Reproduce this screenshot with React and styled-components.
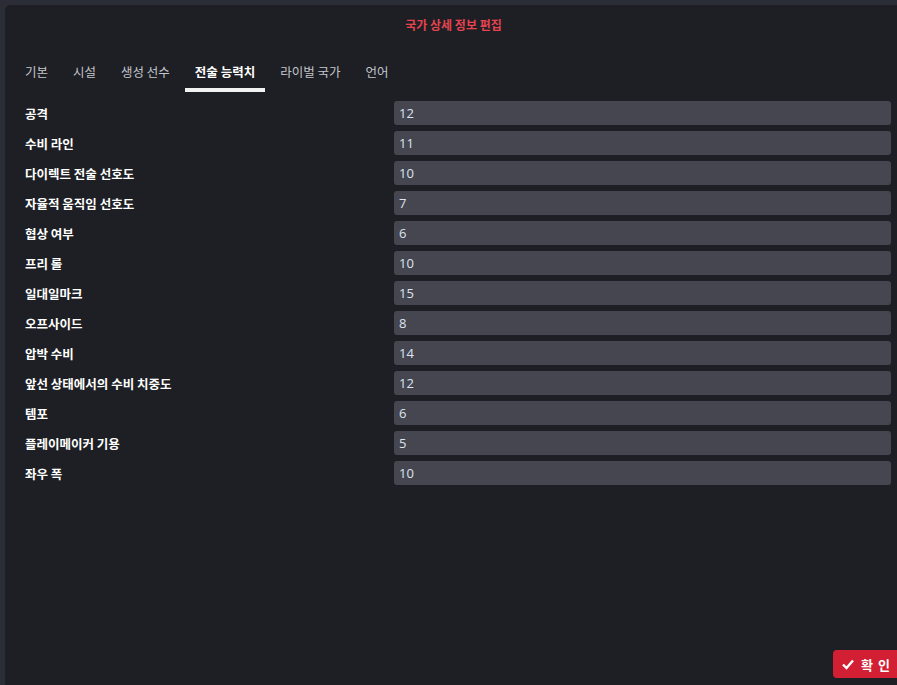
import React from "react";
import styled, { createGlobalStyle } from "styled-components";

const Global = createGlobalStyle`
  html, body { margin: 0; padding: 0; background: #2b2d36; }
  body { font-family: "Noto Sans CJK KR", "Noto Sans", sans-serif; overflow: hidden; }
  * { box-sizing: border-box; }
`;

const Screen = styled.div`
  width: 897px;
  height: 685px;
  padding: 5px 0 0 5px;
  background: #2b2d36;
  overflow: hidden;
`;

const Panel = styled.div`
  position: relative;
  height: 700px;
  background: #1e1f24;
  border-top-left-radius: 5px;
  display: flex;
  flex-direction: column;
`;

const Title = styled.div`
  text-align: center;
  color: #e4434f;
  font-size: 12px;
  font-weight: 700;
  padding-top: 12px;
  padding-left: 5px;
  line-height: 16px;
`;

const Tabs = styled.div`
  display: flex;
  margin-top: 27px;
  padding-left: 10px;
  height: 33px;
`;

const Tab = styled.div`
  padding: 0 10px;
  margin-right: 5px;
  font-size: 12.5px;
  line-height: 18px;
  color: ${(p) => (p.$active ? "#ffffff" : "#c3c5cc")};
  font-weight: ${(p) => (p.$active ? 700 : 400)};
  border-bottom: 4px solid ${(p) => (p.$active ? "#f2f2f2" : "transparent")};
  height: 32px;
  padding-top: 3px;
`;

const Rows = styled.div`
  display: flex;
  flex-direction: column;
  gap: 6px;
  padding: 8px 6px 0 20px;
`;

const Row = styled.div`
  display: grid;
  grid-template-columns: 369px 1fr;
  align-items: center;
  height: 24px;
`;

const Label = styled.div`
  color: #ffffff;
  font-weight: 700;
  font-size: 12.5px;
`;

const Input = styled.div`
  height: 24px;
  background: #454650;
  border-radius: 3px;
  color: #dde4f2;
  font-family: "Open Sans", "Noto Sans", sans-serif;
  font-size: 13px;
  font-weight: 500;
  line-height: 24px;
  padding-left: 5px;
`;

const ConfirmButton = styled.button`
  position: absolute;
  left: 828px;
  top: 645px;
  width: 80px;
  height: 28px;
  border: none;
  border-radius: 4px;
  background: #d21f34;
  color: #ffffff;
  font-family: "Noto Sans CJK KR", sans-serif;
  font-weight: 700;
  font-size: 13px;
  display: flex;
  align-items: center;
  gap: 6px;
  padding: 0 0 0 8px;
  letter-spacing: 5px;
`;

const tabs = ["기본", "시설", "생성 선수", "전술 능력치", "라이벌 국가", "언어"];

const rows = [
  ["공격", 12],
  ["수비 라인", 11],
  ["다이렉트 전술 선호도", 10],
  ["자율적 움직임 선호도", 7],
  ["협상 여부", 6],
  ["프리 롤", 10],
  ["일대일마크", 15],
  ["오프사이드", 8],
  ["압박 수비", 14],
  ["앞선 상태에서의 수비 치중도", 12],
  ["템포", 6],
  ["플레이메이커 기용", 5],
  ["좌우 폭", 10],
];

export default function App() {
  return (
    <Screen>
      <Global />
      <Panel>
        <Title>국가 상세 정보 편집</Title>
        <Tabs>
          {tabs.map((t) => (
            <Tab key={t} $active={t === "전술 능력치"}>
              {t}
            </Tab>
          ))}
        </Tabs>
        <Rows>
          {rows.map(([l, v]) => (
            <Row key={l}>
              <Label>{l}</Label>
              <Input>{v}</Input>
            </Row>
          ))}
        </Rows>
        <ConfirmButton>
          <svg width="14" height="14" viewBox="0 0 14 14">
            <path d="M2 7.5 L5.5 11 L12 3.5" stroke="#fff" strokeWidth="2.4" fill="none" />
          </svg>
          <span>확인</span>
        </ConfirmButton>
      </Panel>
    </Screen>
  );
}
